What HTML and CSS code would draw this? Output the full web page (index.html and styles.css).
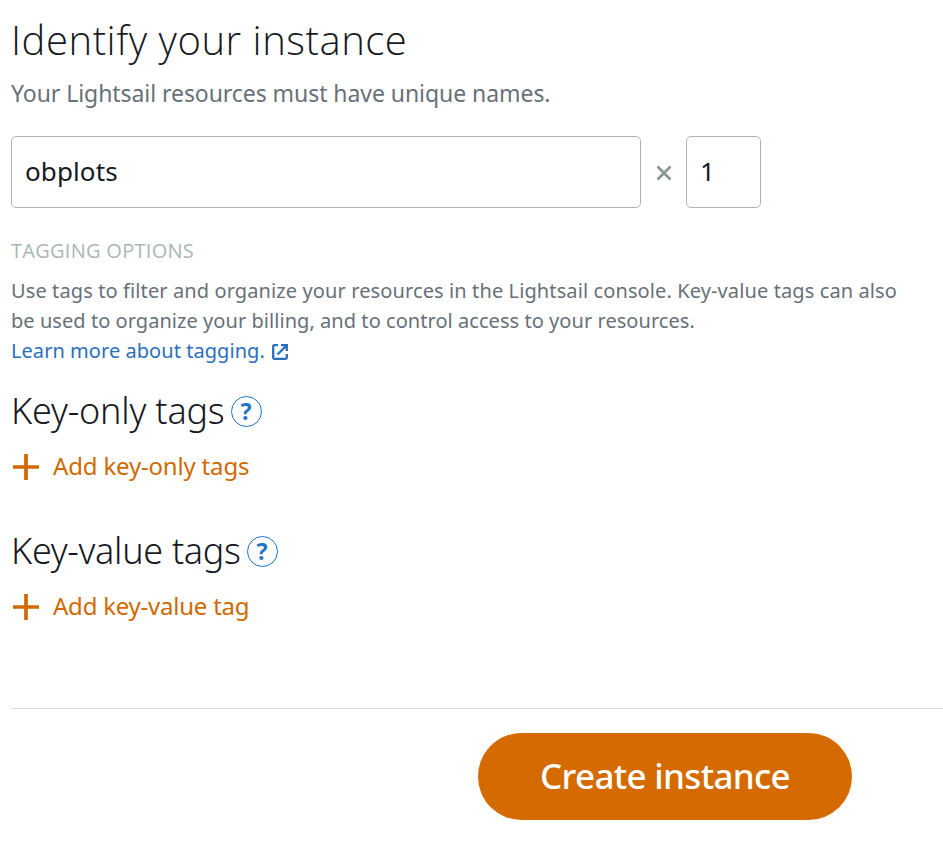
FILE: index.html
```html
<!DOCTYPE html>
<html lang="en">
<head>
<meta charset="utf-8">
<title>Create an instance</title>
<link rel="stylesheet" href="styles.css">
</head>
<body>
<main class="page">
  <h1 class="title">Identify your instance</h1>
  <p class="intro">Your Lightsail resources must have unique names.</p>
  <div class="fields">
    <div class="field name">obplots</div>
    <svg class="times" viewBox="0 0 16 16"><path d="M1.5 1.5L14.5 14.5M14.5 1.5L1.5 14.5"/></svg>
    <div class="field count">1</div>
  </div>
  <h2 class="label">TAGGING OPTIONS</h2>
  <p class="desc"><span class="first-line">Use tags to filter and organize your resources in the Lightsail console. Key-value tags can also</span><br>be used to organize your billing, and to control access to your resources.<br><a class="learn">Learn more about tagging.<svg class="ext" viewBox="0 0 18 18"><path d="M7 2.2H3.2Q2.2 2.2 2.2 3.2V14.8Q2.2 15.8 3.2 15.8H14.8Q15.8 15.8 15.8 14.8V11M10 2.2H15.8V8M15.5 2.5L6.5 11.5"/></svg></a></p>
  <section class="tags">
    <h2 class="subhead"><span>Key-only tags</span><span class="help">?</span></h2>
    <a class="add"><svg class="plus" viewBox="0 0 28 28"><path d="M14 1V27M1 14H27"/></svg><span>Add key-only tags</span></a>
  </section>
  <section class="tags">
    <h2 class="subhead value"><span>Key-value tags</span><span class="help">?</span></h2>
    <a class="add value"><svg class="plus" viewBox="0 0 28 28"><path d="M14 1V27M1 14H27"/></svg><span>Add key-value tag</span></a>
  </section>
  <footer class="footer"><button class="create">Create instance</button></footer>
</main>
</body>
</html>
```
FILE: styles.css
```css
* { box-sizing: border-box; }
body { margin: 0; background: #fff; color: #16191f; font-family: "Noto Sans", "Open Sans", sans-serif; overflow: hidden; }
h1, h2, p { margin: 0; font-weight: 400; white-space: nowrap; }
.page { padding: 15px 0 0 11px; height: 847px; }
.title { font-family: "Open Sans", sans-serif; font-size: 40px; line-height: 50px; font-weight: 300; letter-spacing: .54px; }
.intro { margin-top: 13px; font-size: 23px; line-height: 30px; letter-spacing: -.06px; color: #687078; }
.fields { display: flex; align-items: center; margin-top: 28px; }
.field { height: 72px; border: 1px solid #aab7b8; border-radius: 5px; padding-left: 13px; font-size: 26px; line-height: 68px; letter-spacing: .1px; }
.name { width: 630px; }
.count { width: 75px; }
.times { width: 16px; height: 16px; margin: 1px 14px 0 15px; fill: none; stroke: #879596; stroke-width: 2.6; }
.label { margin-top: 28px; font-family: "Open Sans", sans-serif; font-size: 20px; line-height: 30px; letter-spacing: .28px; color: #aab7b8; }
.desc { margin-top: 10px; font-size: 20px; line-height: 30px; letter-spacing: .05px; color: #687078; }
.first-line { letter-spacing: .11px; }
.learn { color: #2a6fbd; }
.ext { width: 18px; height: 18px; margin-left: 6px; vertical-align: -3px; fill: none; stroke: currentColor; stroke-width: 2.3; }
.tags { height: 140px; padding-top: 20px; }
.subhead { display: flex; align-items: center; height: 50px; font-size: 36px; line-height: 50px; font-weight: 300; letter-spacing: -.2px; }
.subhead.value { letter-spacing: -.32px; }
.help { width: 31px; height: 31px; margin-left: 6px; border: 1.4px solid #2074c5; border-radius: 50%; color: #2074c5; font-size: 23px; line-height: 28px; font-weight: 700; letter-spacing: 0; text-align: center; }
.add { display: flex; align-items: center; margin-top: 15px; height: 30px; font-size: 24px; letter-spacing: -.18px; color: #d16900; }
.add.value { letter-spacing: -.23px; }
.add span { margin-top: -1px; }
.plus { width: 28px; height: 28px; margin: 1px 13px 0 1px; fill: none; stroke: #d16900; stroke-width: 3.7; }
.footer { margin-top: 62px; border-top: 1px solid #d5dbdb; padding: 24px 0 0 467px; }
.create { display: block; width: 374px; height: 87px; border: 0; border-radius: 44px; background: #d46a00; color: #fff; font: 500 35px "Noto Sans", sans-serif; letter-spacing: -.68px; padding: 0 0 2px; }
```
